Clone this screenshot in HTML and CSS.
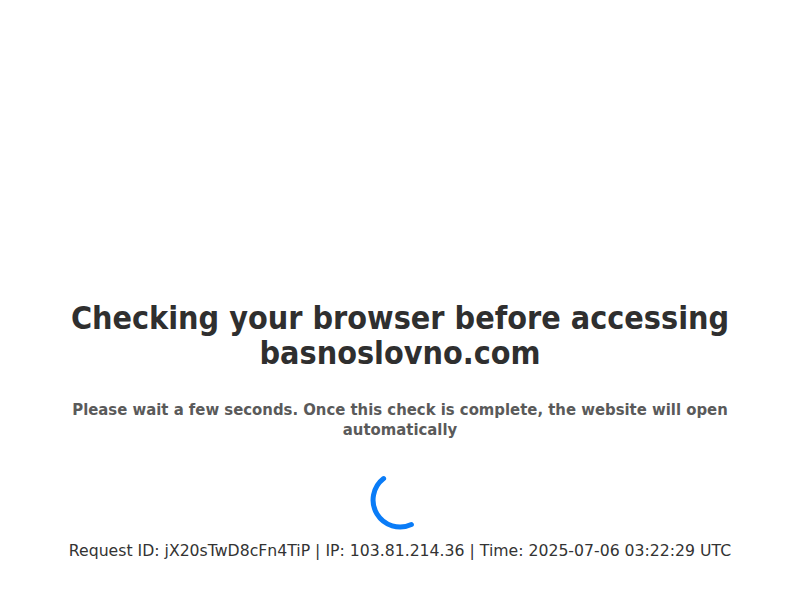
FILE: index.html
```html
<!DOCTYPE html>
<html lang="en">
<head>
    <meta charset="UTF-8">
    <meta name="viewport" content="width=device-width, initial-scale=1.0">
    <title>Checking your browser</title>
    <link rel="stylesheet" href="styles.css">
</head>
<body>
    <div class="container">
        <h1>Checking your browser before accessing basnoslovno.com</h1>
        <p class="message">Please wait a few seconds. Once this check is complete, the website will open automatically</p>

        <div class="spinner">
            <svg width="64" height="64" viewBox="0 0 64 64">
                <path d="M43.4 56.5 A27 27 0 0 1 15.6 10.6" fill="none" stroke="#0a7cf7" stroke-width="5" stroke-linecap="round"/>
            </svg>
        </div>

        <div class="request-info">Request ID: jX20sTwD8cFn4TiP | IP: 103.81.214.36 | Time: 2025-07-06 03:22:29 UTC</div>
    </div>
</body>
</html>
```

FILE: styles.css
```css
* {
    margin: 0;
    padding: 0;
    box-sizing: border-box;
}

body {
    background: #fff;
    font-family: "DejaVu Sans Condensed", "DejaVu Sans", sans-serif;
    color: #333;
}

.container {
    width: 800px;
    padding: 301px 30px 0;
    text-align: center;
}

h1 {
    font-size: 32px;
    font-weight: 700;
    line-height: 35px;
    color: #2f2f2f;
}

.message {
    margin-top: 29px;
    font-size: 16.55px;
    font-weight: 700;
    line-height: 20px;
    color: #5a5a5a;
}

.spinner {
    display: flex;
    justify-content: center;
    margin-top: 27.5px;
}

.request-info {
    margin-top: 9px;
    font-family: "DejaVu Sans", sans-serif;
    font-size: 15.7px;
    line-height: 20px;
    color: #333;
}
```
